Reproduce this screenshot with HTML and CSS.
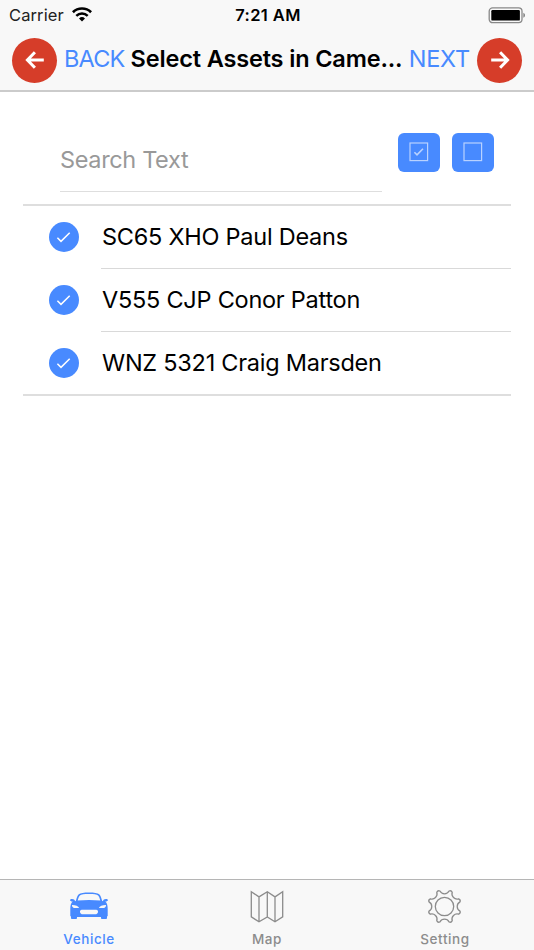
FILE: index.html
```
<!DOCTYPE html>
<html lang="en">
<head>
    <meta charset="UTF-8">
    <meta name="viewport" content="width=device-width, initial-scale=1.0">
    <title>Select Assets</title>
    <link rel="stylesheet" href="styles.css">
</head>
<body>
    <header class="header">
        <div class="status-bar">
            <div class="carrier">
                <span>Carrier</span>
                <svg class="wifi" width="20" height="15" viewBox="0 0 20 15">
                    <path d="M0.9 5.2a13 13 0 0 1 18.2 0" fill="none" stroke="#000" stroke-width="2.7"/>
                    <path d="M4.3 8.8a8.2 8.2 0 0 1 11.4 0" fill="none" stroke="#000" stroke-width="2.5"/>
                    <path d="M7 11.5a4.3 4.3 0 0 1 6 0L10 14.6z"/>
                </svg>
            </div>
            <span class="time">7:21 AM</span>
            <div class="battery">
                <svg width="37" height="17" viewBox="0 0 37 17">
                    <rect x="1.2" y="0.9" width="32.8" height="14.8" rx="3.4" fill="none" stroke="#888" stroke-width="1.3"/>
                    <rect x="3.3" y="3" width="28.6" height="10.6" rx="1.2"/>
                    <path d="M35.3 5.8q1.8 0.9 1.8 2.5t-1.8 2.5z" fill="#888"/>
                </svg>
            </div>
        </div>
        <nav class="nav-bar">
            <a class="nav-link back">
                <span class="round-icon">
                    <svg width="20" height="20" viewBox="0 0 20 20"><path d="M18.8 10H3M9.9 2.2L2.4 10l7.5 7.8"/></svg>
                </span>
                <span class="back-text">BACK</span>
            </a>
            <h1 class="title">Select Assets in Came...</h1>
            <a class="nav-link next">
                <span class="next-text">NEXT</span>
                <span class="round-icon">
                    <svg width="20" height="20" viewBox="0 0 20 20"><path d="M1.2 10H17M10.1 2.2l7.5 7.8l-7.5 7.8"/></svg>
                </span>
            </a>
        </nav>
    </header>

    <main class="content">
        <div class="search-row">
            <input class="search" type="text" placeholder="Search Text">
            <button class="button">
                <svg width="20" height="20" viewBox="0 0 20 20">
                    <rect x="1" y="1" width="17.6" height="17.6"/>
                    <path d="M5.4 10.3l2.6 2.6l6-6.2" stroke-width="1.6"/>
                </svg>
            </button>
            <button class="button">
                <svg width="20" height="20" viewBox="0 0 20 20"><rect x="1" y="1" width="17.6" height="17.6"/></svg>
            </button>
        </div>

        <!-- Assets -->
        <ul class="list">
            <li class="item">
                <span class="check"><svg width="30" height="30" viewBox="0 0 30 30"><path d="M8.4 15.8l3.6 3.6l8.7-8.7"/></svg></span>
                <span class="label">SC65 XHO Paul Deans</span>
            </li>
            <li class="item">
                <span class="check"><svg width="30" height="30" viewBox="0 0 30 30"><path d="M8.4 15.8l3.6 3.6l8.7-8.7"/></svg></span>
                <span class="label">V555 CJP Conor Patton</span>
            </li>
            <li class="item">
                <span class="check"><svg width="30" height="30" viewBox="0 0 30 30"><path d="M8.4 15.8l3.6 3.6l8.7-8.7"/></svg></span>
                <span class="label">WNZ 5321 Craig Marsden</span>
            </li>
        </ul>
    </main>

    <footer class="tabs">
        <a class="tab active">
            <svg width="40" height="36" viewBox="0 0 40 36">
                <path fill="#488aff" fill-rule="evenodd" d="M6.9 11.8C7.6 8.7 8.6 6.4 9.8 5.2C11.2 4 15 3.5 20 3.5s8.800 .5 10.200 1.700c1.200 1.200 2.200 3.500 2.900 6.600l.8 .5c.4-1.500 1.300-2.200 3-2.200c1.300 0 2 .4 2 1.100s-.7 1.200-2.600 1.300c1.800 1.600 2.400 4 2.400 7.200v7.600h-.7v1.400c0 1-.4 1.400-1.400 1.400h-3.200c-1 0-1.400-.4-1.400-1.400v-.8H8v.8c0 1-.4 1.400-1.400 1.400H3.400c-1 0-1.400-.4-1.400-1.400v-1.400h-.7v-7.600c0-3.200 .6-5.600 2.400-7.200C1.800 12.400 1.100 11.900 1.100 11.200s.7-1.100 2-1.100c1.700 0 2.600 .7 3 2.200z
                    M8.700 11.600q11.300-1.400 22.600 0c-.7-2.800-1.400-4.300-2.200-5.100C28 5.500 24.500 5.100 20 5.100s-8 .4-9.100 1.400c-.8 .8-1.500 2.300-2.200 5.100z
                    M2.900 16.100c.3 1.900 .8 2.700 2 2.800l5.300 .2c-1-1.900-3.700-3.100-7.300-3z
                    M37.100 16.100c-.3 1.900-.8 2.700-2 2.800l-5.300 .2c1-1.900 3.700-3.100 7.300-3z
                    M14 20.700h12c2.400 0 3 .7 3 1.700c0 1.700-.9 2.900-3.300 2.900H14.300c-2.400 0-3.300-1.200-3.300-2.900c0-1 .6-1.700 3-1.700z"/>
            </svg>
            <span>Vehicle</span>
        </a>
        <a class="tab">
            <svg width="36" height="36" viewBox="0 0 36 36">
                <path class="line" d="M2.300 2.700l7.700 5.200l8.300-5.200l7.700 5.200l7.700-5.200v25.200L26 32.800l-7.700-4.900l-8.300 4.900l-7.700-4.900zM10 7.900v24.900M18.300 2.700v25.200M26 7.900v24.900"/>
            </svg>
            <span>Map</span>
        </a>
        <a class="tab">
            <svg width="36" height="36" viewBox="-17.500 -17.500 36 36">
                <circle class="line" r="9.200"/>
                <path class="line" d="M-4.600-15.500A5.200 5.200 0 0 0 4.600-15.500A2.400 2.400 0 0 1 7.700-14.200A5.200 5.200 0 0 0 14.200-7.700A2.400 2.400 0 0 1 15.500-4.600A5.200 5.200 0 0 0 15.500 4.600A2.400 2.400 0 0 1 14.200 7.700A5.200 5.200 0 0 0 7.700 14.200A2.400 2.400 0 0 1 4.600 15.500A5.200 5.200 0 0 0-4.600 15.500A2.400 2.400 0 0 1-7.700 14.200A5.200 5.200 0 0 0-14.200 7.700A2.400 2.400 0 0 1-15.500 4.600A5.200 5.200 0 0 0-15.500-4.600A2.400 2.400 0 0 1-14.200-7.700A5.200 5.200 0 0 0-7.700-14.200A2.400 2.400 0 0 1-4.600-15.500z"/>
            </svg>
            <span>Setting</span>
        </a>
    </footer>
</body>
</html>
```
FILE: styles.css
```
* {
    box-sizing: border-box;
}
body {
    display: flex;
    flex-direction: column;
    height: 100vh;
    margin: 0;
    background-color: #fff;
    color: #000;
    font-family: Inter, "Liberation Sans", sans-serif;
    white-space: nowrap;
}
.header {
    height: 92px;
    background-color: #f8f8f8;
    border-bottom: 2px solid #cbcbcb;
}
.status-bar {
    display: grid;
    grid-template-columns: 1fr auto 1fr;
    align-items: center;
    height: 30px;
    padding: 0 9px;
    font-size: 16.5px;
}
.carrier {
    display: flex;
    align-items: center;
    gap: 8px;
    color: #222;
    letter-spacing: 0.1px;
}
.wifi {
    margin-top: -2px;
}
.time {
    padding-left: 2px;
    font-weight: 600;
    font-size: 16.5px;
    letter-spacing: 0.4px;
}
.battery {
    display: flex;
    justify-content: flex-end;
}
.nav-bar {
    display: flex;
    align-items: center;
    height: 60px;
    padding: 0 12px;
    line-height: 28px;
}
.nav-link {
    display: flex;
    align-items: center;
    color: #488aff;
    font-size: 23.5px;
}
.back-text {
    margin: -2px 0 0 7px;
    letter-spacing: -0.8px;
}
.next-text {
    margin: -2px 7px 0 0;
    letter-spacing: -0.2px;
}
.next {
    margin-left: auto;
}
.round-icon {
    display: flex;
    align-items: center;
    justify-content: center;
    width: 45px;
    height: 45px;
    border-radius: 50%;
    background-color: #d63d29;
}
.round-icon path {
    fill: none;
    stroke: #fff;
    stroke-width: 3;
}
.title {
    margin: -2px 0 0 6px;
    font-size: 23.5px;
    font-weight: 600;
    letter-spacing: -0.15px;
}
.content {
    flex: 1;
    padding: 0 23px;
}
.search-row {
    display: flex;
    align-items: flex-start;
    height: 112px;
    padding: 41px 0 0 37px;
}
.search {
    flex-shrink: 0;
    width: 322px;
    height: 59px;
    margin-right: 16px;
    padding: 0 0 5px;
    border: 0;
    border-bottom: 1px solid #dedede;
    outline: none;
    background: none;
    font-family: inherit;
    font-size: 23.5px;
    letter-spacing: -0.35px;
}
.search::placeholder {
    color: #999;
}
.button {
    display: flex;
    flex-shrink: 0;
    justify-content: center;
    width: 42px;
    height: 39px;
    margin-right: 12px;
    padding: 9px 0 0;
    border: 0;
    border-radius: 6px;
    background-color: #488aff;
}
.button svg {
    fill: none;
    stroke: #b9d2ff;
    stroke-width: 1.2;
}
.list {
    height: 192px;
    margin: 0;
    padding: 0;
    border-top: 2px solid #dedede;
    border-bottom: 2px solid #dedede;
    list-style: none;
}
.item {
    display: flex;
    align-items: center;
    height: 63px;
    padding-left: 26px;
}
.item:last-child {
    height: 62px;
}
.check {
    width: 30px;
    height: 30px;
    margin: -1px 22px 0 0;
    border-radius: 50%;
    background-color: #488aff;
}
.check path {
    fill: none;
    stroke: #fff;
    stroke-width: 1.5;
}
.label {
    flex: 1;
    height: 63px;
    padding-left: 1px;
    border-bottom: 1px solid #d9d9d9;
    font-size: 23.5px;
    letter-spacing: -0.25px;
    line-height: 62px;
}
.item:last-child .label {
    border-bottom: 0;
}
.tabs {
    display: flex;
    height: 71px;
    border-top: 1px solid #b5b5b5;
    background-color: #f8f8f8;
}
.tab {
    display: flex;
    flex: 1;
    flex-direction: column;
    align-items: center;
    padding-top: 9px;
    color: #8c8c8c;
    font-size: 13.5px;
    font-weight: 500;
    letter-spacing: 0.6px;
}
.tab span {
    margin-top: 6px;
}
.tab.active {
    color: #488aff;
}
.line {
    fill: none;
    stroke: #8c8c8c;
    stroke-width: 1.3;
}
```
